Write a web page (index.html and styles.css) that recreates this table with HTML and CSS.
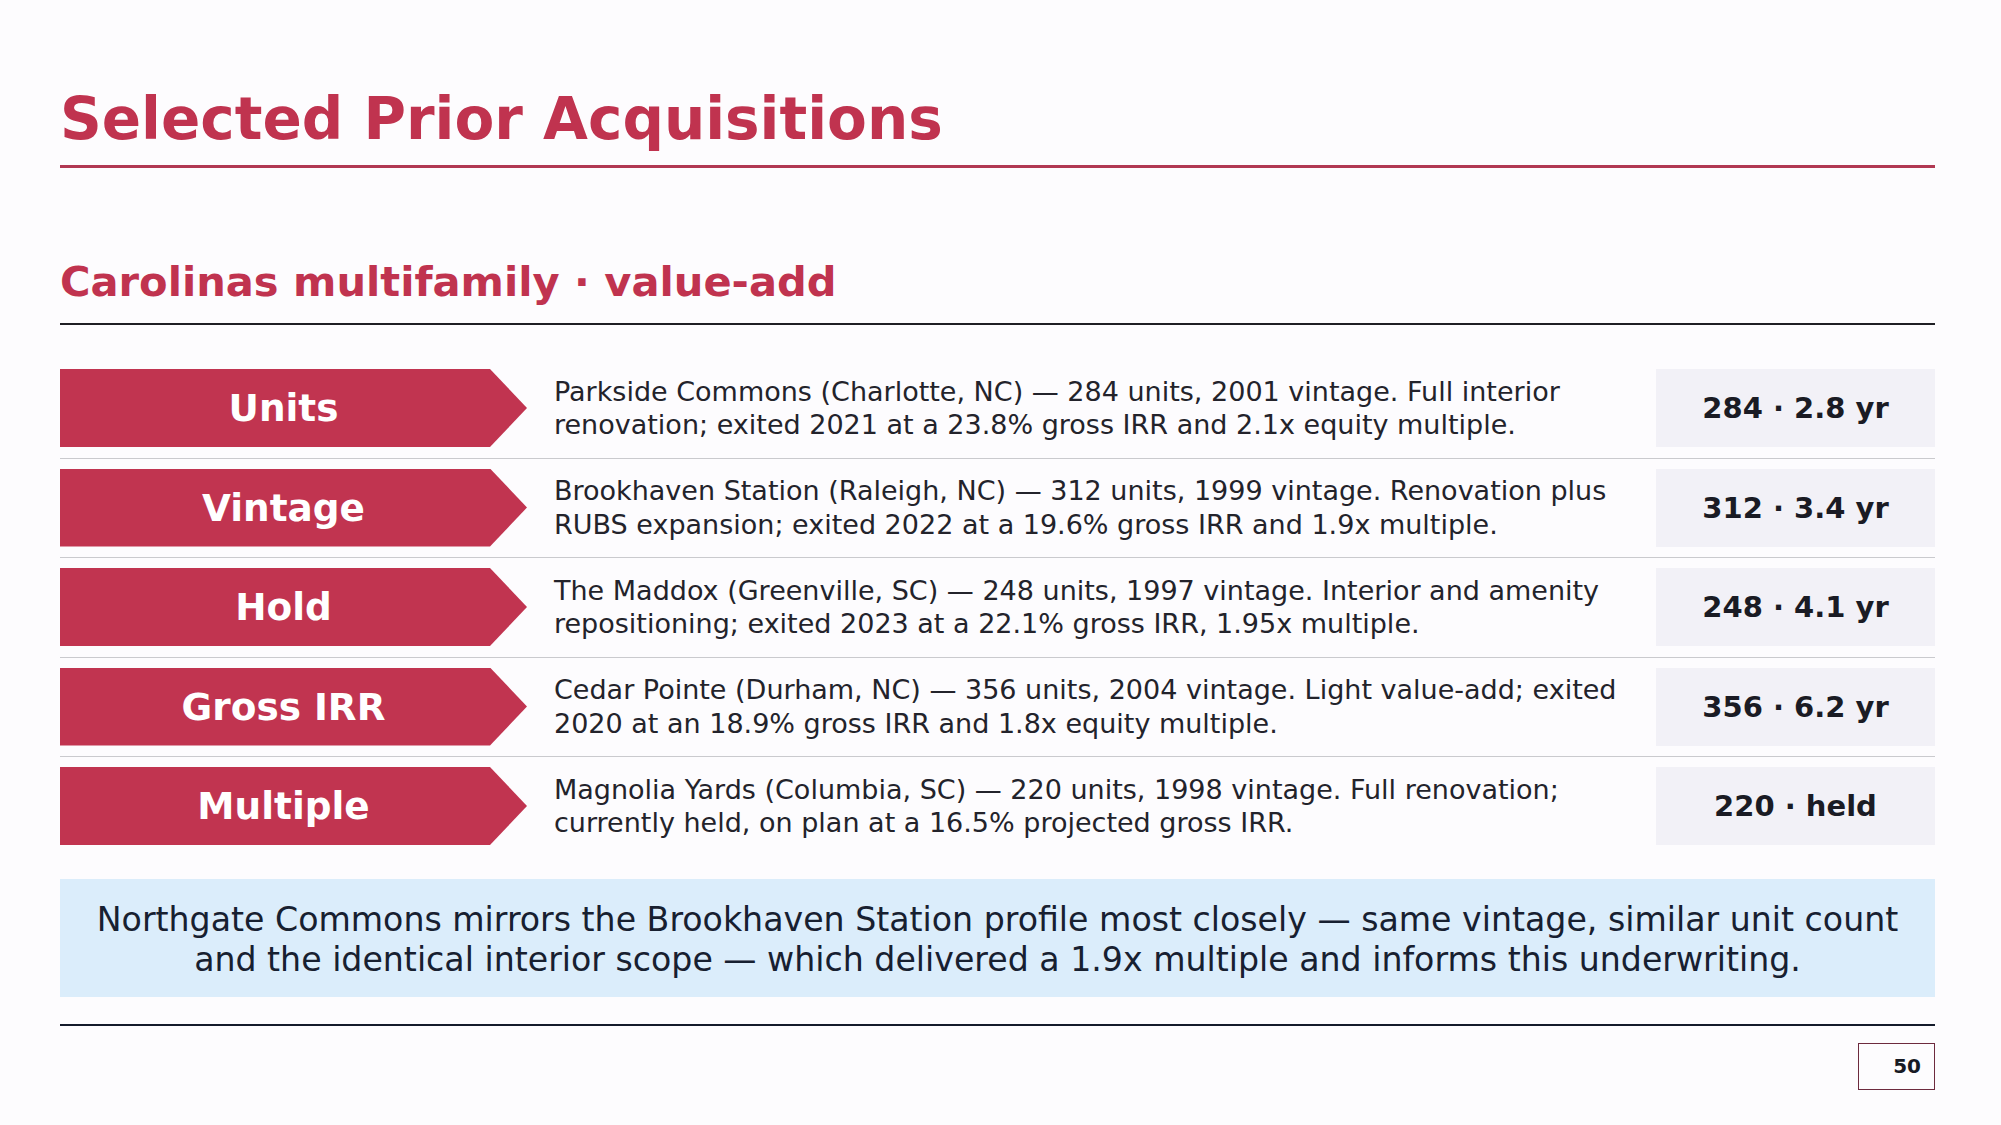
FILE: index.html
```html
<!DOCTYPE html>
<html lang="en">
<head>
<meta charset="utf-8">
<title>Selected Prior Acquisitions</title>
<link rel="stylesheet" href="styles.css">
</head>
<body>
<div class="slide">
  <h1 class="title">Selected Prior Acquisitions</h1>
  <h2 class="subtitle">Carolinas multifamily · value-add</h2>
  <div class="rows">
    <div class="row">
      <div class="tag"><span>Units</span></div>
      <div class="desc">Parkside Commons (Charlotte, NC) — 284 units, 2001 vintage. Full interior renovation; exited 2021 at a 23.8% gross IRR and 2.1x equity multiple.</div>
      <div class="value">284 · 2.8 yr</div>
    </div>
    <div class="row">
      <div class="tag"><span>Vintage</span></div>
      <div class="desc">Brookhaven Station (Raleigh, NC) — 312 units, 1999 vintage. Renovation plus RUBS expansion; exited 2022 at a 19.6% gross IRR and 1.9x multiple.</div>
      <div class="value">312 · 3.4 yr</div>
    </div>
    <div class="row">
      <div class="tag"><span>Hold</span></div>
      <div class="desc">The Maddox (Greenville, SC) — 248 units, 1997 vintage. Interior and amenity repositioning; exited 2023 at a 22.1% gross IRR, 1.95x multiple.</div>
      <div class="value">248 · 4.1 yr</div>
    </div>
    <div class="row">
      <div class="tag"><span>Gross IRR</span></div>
      <div class="desc">Cedar Pointe (Durham, NC) — 356 units, 2004 vintage. Light value-add; exited 2020 at an 18.9% gross IRR and 1.8x equity multiple.</div>
      <div class="value">356 · 6.2 yr</div>
    </div>
    <div class="row">
      <div class="tag"><span>Multiple</span></div>
      <div class="desc">Magnolia Yards (Columbia, SC) — 220 units, 1998 vintage. Full renovation; currently held, on plan at a 16.5% projected gross IRR.</div>
      <div class="value">220 · held</div>
    </div>
  </div>
  <div class="callout">Northgate Commons mirrors the Brookhaven Station profile most closely — same vintage, similar unit count and the identical interior scope — which delivered a 1.9x multiple and informs this underwriting.</div>
  <div class="footer">
    <div class="page">50</div>
  </div>
</div>
</body>
</html>
```

FILE: styles.css
```css
html, body {
  margin: 0;
  padding: 0;
  background: #fdfcfe;
}

body {
  font-family: "DejaVu Sans", Verdana, sans-serif;
  color: #1c1d26;
  width: 2001px;
  height: 1125px;
  overflow: hidden;
}

.slide {
  padding: 84px 66px 0 60px;
  display: flex;
  flex-direction: column;
}

.title {
  margin: 0;
  font-size: 58px;
  line-height: 70px;
  font-weight: bold;
  color: #c0334f;
  padding-bottom: 11px;
  border-bottom: 3px solid #b13853;
}

.subtitle {
  margin: 89px 0 0;
  font-size: 41.6px;
  line-height: 50px;
  font-weight: bold;
  color: #c0334f;
  padding-bottom: 16px;
  border-bottom: 2px solid #1f1f24;
}

.rows {
  margin-top: 34px;
  display: flex;
  flex-direction: column;
}

.row {
  display: flex;
  align-items: center;
  padding: 10px 0 10.5px;
  border-bottom: 1px solid #cacace;
}

.row:last-child {
  border-bottom: none;
}

.tag {
  flex: 0 0 467px;
  height: 78px;
  background: #c13450;
  clip-path: polygon(0 0, 430px 0, 100% 50%, 430px 100%, 0 100%);
  display: flex;
  align-items: center;
  justify-content: center;
  padding-right: 20px;
  box-sizing: border-box;
  color: #ffffff;
  font-size: 37.4px;
  font-weight: bold;
}

.desc {
  flex: 1;
  margin-left: 27px;
  margin-right: 24px;
  font-size: 27px;
  line-height: 33.5px;
  color: #23232b;
}

.value {
  flex: 0 0 279px;
  height: 78px;
  background: #f2f1f7;
  display: flex;
  align-items: center;
  justify-content: center;
  font-size: 29px;
  font-weight: bold;
  color: #1a1b24;
}

.callout {
  margin-top: 23px;
  background: #dbedfb;
  padding: 21px 22px 17px;
  text-align: center;
  font-size: 33.2px;
  line-height: 40px;
  color: #172030;
}

.footer {
  margin-top: 27px;
  border-top: 2px solid #141b2b;
  display: flex;
  justify-content: flex-end;
  padding-top: 17px;
}

.page {
  width: 77px;
  height: 47px;
  box-sizing: border-box;
  border: 1px solid #6d2a3e;
  display: flex;
  align-items: center;
  justify-content: flex-end;
  padding-right: 13px;
  font-size: 20px;
  font-weight: bold;
  color: #171a24;
}
```
